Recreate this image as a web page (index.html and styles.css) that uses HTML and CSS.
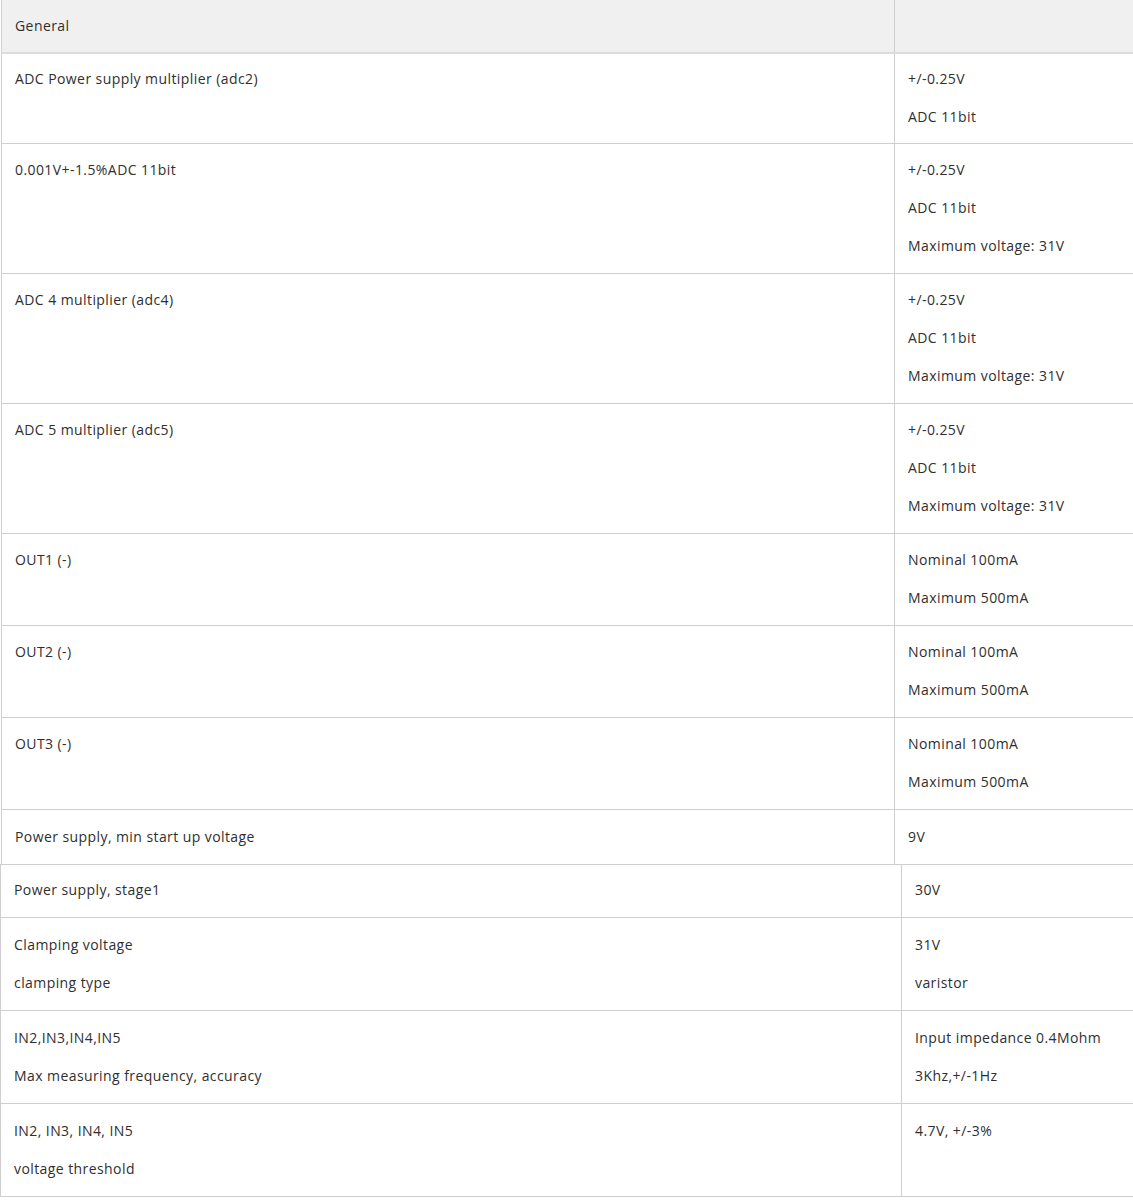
FILE: index.html
```html
<!DOCTYPE html>
<html lang="en">
<head>
    <meta charset="UTF-8">
    <meta name="viewport" content="width=device-width, initial-scale=1.0">
    <title>Specifications</title>
    <link rel="stylesheet" href="styles.css">
</head>
<body>
    <table class="spec spec-main">
        <thead>
            <tr>
                <th class="col-name"><p>General</p></th>
                <th class="col-value"></th>
            </tr>
        </thead>
        <tbody>
            <tr class="first">
                <td><p>ADC Power supply multiplier (adc2)</p></td>
                <td><p>+/-0.25V</p><p>ADC 11bit</p></td>
            </tr>
            <tr>
                <td><p>0.001V+-1.5%ADC 11bit</p></td>
                <td><p>+/-0.25V</p><p>ADC 11bit</p><p>Maximum voltage: 31V</p></td>
            </tr>
            <tr>
                <td><p>ADC 4 multiplier (adc4)</p></td>
                <td><p>+/-0.25V</p><p>ADC 11bit</p><p>Maximum voltage: 31V</p></td>
            </tr>
            <tr>
                <td><p>ADC 5 multiplier (adc5)</p></td>
                <td><p>+/-0.25V</p><p>ADC 11bit</p><p>Maximum voltage: 31V</p></td>
            </tr>
            <tr>
                <td><p>OUT1 (-)</p></td>
                <td><p>Nominal 100mA</p><p>Maximum 500mA</p></td>
            </tr>
            <tr>
                <td><p>OUT2 (-)</p></td>
                <td><p>Nominal 100mA</p><p>Maximum 500mA</p></td>
            </tr>
            <tr>
                <td><p>OUT3 (-)</p></td>
                <td><p>Nominal 100mA</p><p>Maximum 500mA</p></td>
            </tr>
            <tr class="last">
                <td><p>Power supply, min start up voltage</p></td>
                <td><p>9V</p></td>
            </tr>
        </tbody>
    </table>

    <table class="spec spec-extra">
        <tbody>
            <tr class="single">
                <td class="col-name"><p>Power supply, stage1</p></td>
                <td class="col-value"><p>30V</p></td>
            </tr>
            <tr>
                <td><p>Clamping voltage</p><p>clamping type</p></td>
                <td><p>31V</p><p>varistor</p></td>
            </tr>
            <tr>
                <td><p>IN2,IN3,IN4,IN5</p><p>Max measuring frequency, accuracy</p></td>
                <td><p>Input impedance 0.4Mohm</p><p>3Khz,+/-1Hz</p></td>
            </tr>
            <tr>
                <td><p>IN2, IN3, IN4, IN5</p><p>voltage threshold</p></td>
                <td><p>4.7V, +/-3%</p></td>
            </tr>
        </tbody>
    </table>
</body>
</html>
```

FILE: styles.css
```css
body {
    font-family: "Open Sans", Arial, sans-serif;
    font-size: 14px;
    letter-spacing: 0.42px;
    color: #2f2f2f;
    background-color: white;
    margin: 0;
    padding: 0;
}
.spec {
    border-collapse: collapse;
    table-layout: fixed;
    width: calc(100% - 1px);
}
.spec td,
.spec th {
    border: 1px solid #cfcfcf;
    padding: 14px 13px 1px;
    text-align: left;
    vertical-align: top;
    font-weight: normal;
}
.spec td:last-child,
.spec th:last-child {
    border-right: none;
}
.spec p {
    margin: 0 0 14px;
    line-height: 24px;
}
.spec-main {
    margin-left: 1px;
}
.spec-main .col-name {
    width: 866px;
}
.spec-main thead th {
    background-color: #f0f0f0;
    border-top: none;
    border-bottom: 2px solid #dcdcdc;
    padding-top: 14px;
    padding-bottom: 2px;
}
.spec-main thead th p {
    margin-bottom: 12px;
}
.spec-main tr.first td {
    padding-top: 13px;
    padding-bottom: 0;
}
.spec-main tr.last td {
    border-bottom: none;
    padding-top: 15px;
    padding-bottom: 1px;
}
.spec-extra {
    width: 100%;
}
.spec-extra .col-name {
    width: 874px;
}
.spec-extra td {
    padding-top: 15px;
    padding-bottom: 1px;
}
.spec-extra tr.single td {
    padding-top: 13px;
    padding-bottom: 1px;
}
```
